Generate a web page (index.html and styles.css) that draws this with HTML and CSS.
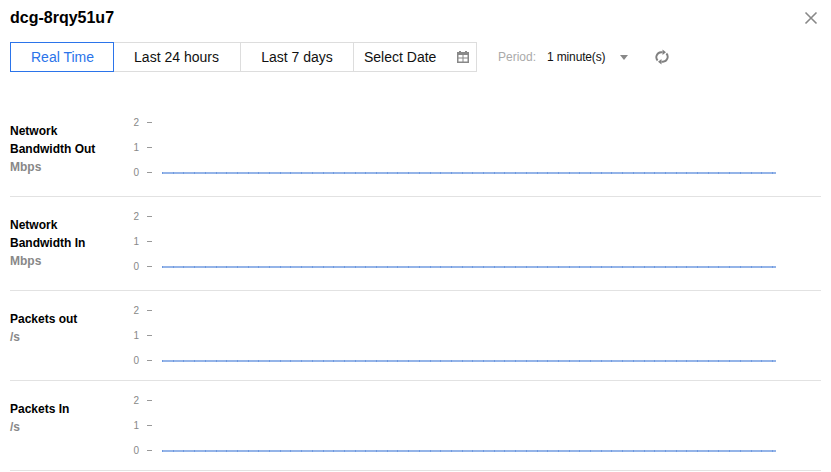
FILE: index.html
```html
<!DOCTYPE html>
<html lang="en">
<head>
<meta charset="utf-8">
<title>dcg-8rqy51u7</title>
<link rel="stylesheet" href="styles.css">
</head>
<body>
<div class="panel">
  <header class="head">
    <h1 class="title">dcg-8rqy51u7</h1>
    <svg class="close" width="14" height="14" viewBox="0 0 14 14"><path d="M1.500 1.500l11 11M12.500 1.500l-11 11" stroke="#888" stroke-width="1.600" fill="none"/></svg>
  </header>
  <div class="toolbar">
    <div class="tabs">
      <div class="tab tab-active tab-rt">Real Time</div>
      <div class="tab tab-24">Last 24 hours</div>
      <div class="tab tab-7">Last 7 days</div>
      <div class="tab tab-date"><span>Select Date</span>
        <svg width="12" height="12" viewBox="0 0 12 12"><path fill="#888" fill-rule="evenodd" d="M2 0h2v1h4V0h2v1h2v11H0V1h2zM1.500 4v2.500h4V4zM6.500 4v2.500h4V4zM1.500 7.500v3h4v-3zM6.500 7.500v3h4v-3z"/></svg>
      </div>
    </div>
    <span class="period-label">Period:</span>
    <span class="period-value">1 minute(s)</span>
    <span class="caret"></span>
    <svg class="refresh" width="14" height="16" viewBox="0 0 14 16"><g fill="none" stroke="#808080" stroke-width="1.900"><path d="M2.600 11.500A5 5 0 0 1 6 3.200h1.500"/><path d="M11.400 4.500A5 5 0 0 1 8 12.800H6.500"/></g><path fill="#808080" d="M7.500 .5l3.500 2.700-3.500 2.700zM6.500 10.100l-3.500 2.700 3.500 2.700z"/></svg>
  </div>
  <section class="row row-tall row-first">
    <div class="label"><div>Network</div><div>Bandwidth Out</div><div class="unit">Mbps</div></div>
    <div class="axis"><div class="y">2</div><div class="y">1</div><div class="y">0</div></div>
    <div class="line"></div>
  </section>
  <section class="row row-tall">
    <div class="label"><div>Network</div><div>Bandwidth In</div><div class="unit">Mbps</div></div>
    <div class="axis"><div class="y">2</div><div class="y">1</div><div class="y">0</div></div>
    <div class="line"></div>
  </section>
  <section class="row">
    <div class="label"><div>Packets out</div><div class="unit">/s</div></div>
    <div class="axis"><div class="y">2</div><div class="y">1</div><div class="y">0</div></div>
    <div class="line"></div>
  </section>
  <section class="row">
    <div class="label"><div>Packets In</div><div class="unit">/s</div></div>
    <div class="axis"><div class="y">2</div><div class="y">1</div><div class="y">0</div></div>
    <div class="line"></div>
  </section>
</div>
</body>
</html>
```
FILE: styles.css
```css
html, body { margin: 0; padding: 0; background: #fff; height: 472px; overflow: hidden; }
body { font-family: "Liberation Sans", Arial, sans-serif; color: #000; }
.panel { padding: 0 10px; width: 811px; }
.head { display: flex; align-items: center; justify-content: space-between; height: 36px; }
.title { margin: 0; font-size: 16px; font-weight: 700; line-height: 36px; color: #000; }
.close { margin-right: 3px; }
.toolbar { display: flex; align-items: center; margin-top: 6px; height: 30px; }
.tabs { display: flex; width: 467px; height: 30px; }
.tab { display: flex; align-items: center; justify-content: center; box-sizing: border-box; height: 30px; font-size: 14px; color: #111; border: 1px solid #ddd; border-left: 0; }
.tab-active { width: 104px; border: 1px solid #2b74ea; color: #2b74ea; padding-left: 1px; }
.tab-24 { width: 127px; padding-right: 1px; }
.tab-7 { width: 113px; }
.tab-date { width: 123px; justify-content: space-between; padding: 0 7px 0 10px; }
.period-label { margin-left: 21px; font-size: 12px; color: #aaa; }
.period-value { margin-left: 11px; font-size: 12px; color: #111; letter-spacing: -0.15px; }
.caret { width: 0; height: 0; margin-left: 15px; border: 4.500px solid transparent; border-top: 5px solid #888; border-bottom: 0; }
.refresh { margin-left: 27px; }
.row { display: flex; align-items: flex-start; height: 89px; border-bottom: 1px solid #e2e2e2; }
.row-tall { height: 93px; }
.row-first { margin-top: 31px; }
.label { width: 114px; padding-top: 19px; font-size: 12px; font-weight: 700; line-height: 18px; color: #000; }
.unit { color: #888; }
.axis { width: 28px; padding-top: 7px; }
.y { display: flex; justify-content: flex-end; align-items: center; gap: 8px; height: 25px; font-size: 10px; color: #888; }
.y::after { content: ""; width: 5px; height: 1px; background: #999; }
.line { width: 614px; height: 2px; margin: 69px 0 0 10px; background: repeating-linear-gradient(90deg, #6f9ae0 0 1px, #94b4e8 1px 10.7px); }
```
